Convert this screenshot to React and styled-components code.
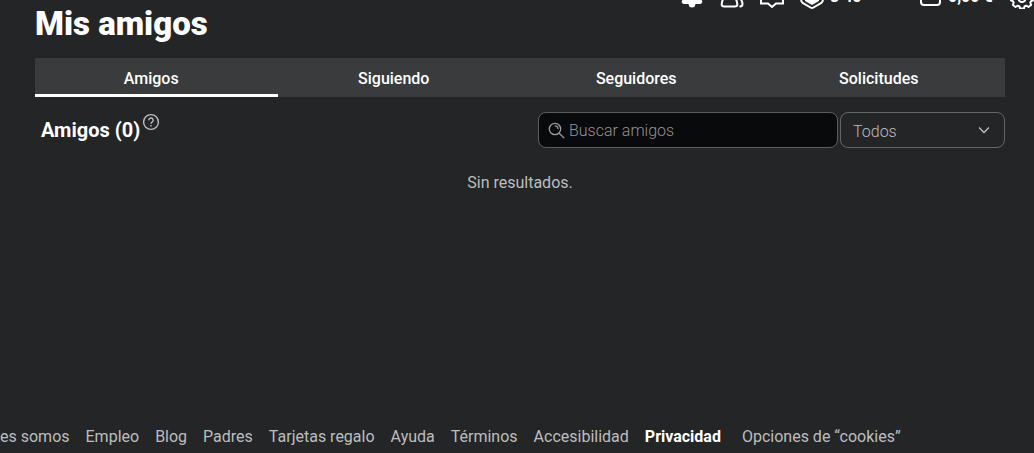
import React from 'react'
import styled, { createGlobalStyle } from 'styled-components'

const GlobalStyle = createGlobalStyle`
  * {
    box-sizing: border-box;
  }

  body {
    margin: 0;
    background: #232527;
    color: #fff;
    font-family: Roboto, "Liberation Sans", sans-serif;
    font-size: 16px;
    overflow: hidden;
  }
`

const Page = styled.div`
  display: flex;
  flex-direction: column;
  min-height: 100vh;
`

const TopBar = styled.header`
  display: flex;
  justify-content: flex-end;
  align-items: flex-end;
  gap: 16px;
  height: 9px;
  overflow: hidden;
`

const TopButton = styled.button`
  display: flex;
  flex: none;
  align-items: center;
  gap: 6px;
  min-width: ${({ $width = 24 }) => $width}px;
  height: 24px;
  padding: 0;
  border: 0;
  background: none;
  color: #fff;
  font: inherit;
  font-weight: 700;
  line-height: 24px;

  svg {
    display: block;
    flex: none;
  }
`

const Main = styled.main`
  flex: 1;
  padding: 0 29px 0 35px;
`

const Title = styled.h1`
  margin: 0;
  padding-bottom: 19px;
  font-size: 33px;
  font-weight: 900;
  line-height: 30px;
`

const Tabs = styled.nav`
  display: grid;
  grid-template-columns: repeat(4, 1fr);
  background: #393b3d;
`

const Tab = styled.a`
  padding: 12px 10px 7px 0;
  border-bottom: 3px solid ${({ $active }) => ($active ? '#fff' : 'transparent')};
  color: #fff;
  font-weight: 500;
  line-height: 17px;
  text-align: center;
  text-decoration: none;
`

const Toolbar = styled.div`
  display: flex;
  align-items: center;
  gap: 2px;
  padding: 15px 0 0 6px;
`

const Heading = styled.h2`
  display: flex;
  flex: 1;
  margin: 0;
  font-size: 20px;
  font-weight: 700;
  line-height: 36px;
`

const HelpButton = styled.button`
  align-self: flex-start;
  margin: 1px 0 0 2px;
  padding: 0;
  border: 0;
  background: none;
  color: #bdbebe;

  svg {
    display: block;
  }
`

const SearchBox = styled.label`
  display: flex;
  align-items: center;
  gap: 4px;
  width: 300px;
  height: 36px;
  padding: 0 9px;
  border: 1px solid #5b5d5f;
  border-radius: 8px;
  background: #090a0c;
  color: #9b9c9d;
`

const SearchInput = styled.input`
  flex: 1;
  min-width: 0;
  padding: 0;
  border: 0;
  outline: 0;
  background: none;
  color: #fff;
  font: inherit;
  font-weight: 300;

  &::placeholder {
    color: #929394;
    opacity: 1;
  }
`

const FilterBox = styled.div`
  display: grid;
  align-items: center;
  width: 165px;
  height: 36px;
  border: 1px solid #656668;
  border-radius: 8px;
  color: #bdbebe;

  > * {
    grid-area: 1 / 1;
  }

  svg {
    justify-self: end;
    margin-right: 14px;
    pointer-events: none;
  }
`

const FilterSelect = styled.select`
  appearance: none;
  width: 100%;
  height: 34px;
  padding: 2px 32px 0 12px;
  border: 0;
  background: none;
  color: #bdbebe;
  font: inherit;
  font-weight: 300;
`

const Empty = styled.p`
  margin: 0;
  padding-top: 25px;
  color: #bdbebe;
  line-height: 20px;
  text-align: center;
`

const Footer = styled.footer`
  display: flex;
  gap: 16px;
  padding-bottom: 6px;
  line-height: 20px;
  white-space: nowrap;
`

const FooterLink = styled.a`
  margin-right: ${({ $strong }) => ($strong ? '5px' : 0)};
  color: ${({ $strong }) => ($strong ? '#fff' : '#bdbebe')};
  font-weight: ${({ $strong }) => ($strong ? 700 : 400)};
  text-decoration: none;
`

const tabs = ['Amigos', 'Siguiendo', 'Seguidores', 'Solicitudes']
const links = ['es somos', 'Empleo', 'Blog', 'Padres', 'Tarjetas regalo', 'Ayuda', 'Términos', 'Accesibilidad', 'Privacidad', 'Opciones de “cookies”']

function Icon({ children }) {
  return (
    <svg width="24" height="24" viewBox="0 0 24 24" fill="none" stroke="currentColor" strokeWidth="2" strokeLinejoin="round" strokeLinecap="round">
      {children}
    </svg>
  )
}

function App() {
  return (
    <>
      <GlobalStyle />
      <Page>
        <TopBar>
          <TopButton aria-label="Notificaciones">
            <Icon>
              <path d="M12 1a7 7 0 0 0-7 7v4l-3 3.500c-.8 2 .2 3.500 2 3.500h4.500l.8 2.500c1.200 1.200 4.200 1.200 5.400 0l.8-2.500H20c1.800 0 2.800-1.500 2-3.500L19 12V8a7 7 0 0 0-7-7z" fill="currentColor" stroke="none" />
            </Icon>
          </TopButton>
          <TopButton aria-label="Amigos">
            <Icon>
              <circle cx="9.500" cy="6" r="4" />
              <path d="M6 11c-2.500 2-4.300 5.500-4.300 8.500 0 1.200 1 2 2.500 2h10.600c1.500 0 2.500-.8 2.500-2 0-3-1.800-6.500-4.300-8.500" />
              <path d="M17.500 11.500c2.800 1.700 5 5 5 7.500 0 1.600-.8 2.400-2.300 2.500" />
            </Icon>
          </TopButton>
          <TopButton aria-label="Chat">
            <Icon>
              <path d="M1 3h22v15.500h-7L12 22l-4-3.500H1z" strokeLinejoin="miter" />
            </Icon>
          </TopButton>
          <TopButton $width={102}>
            <Icon>
              <path d="M12 1.500l9 5c1.200.7 1.800 1.600 1.800 2.900v5.800c0 1.300-.6 2.200-1.800 2.900l-7.500 4.400c-1 .6-2 .6-3 0L3 18.100c-1.200-.7-1.800-1.600-1.800-2.900V9.400c0-1.300.6-2.200 1.800-2.900z" />
              <path d="M12 5l7 4v7l-7 4-7-4V9z" fill="currentColor" stroke="none" />
              <path d="M9.500 9.500h5v5h-5z" fill="#232527" stroke="none" />
            </Icon>
            3 45
          </TopButton>
          <TopButton $width={76}>
            <Icon>
              <rect x="3" y="4" width="19" height="16" rx="3" />
            </Icon>
            0,00 €
          </TopButton>
          <TopButton aria-label="Configuración">
            <Icon>
              <path d="M10 2h4l.6 2.800 2 .9 2.400-1.600 2.900 2.900-1.600 2.400.9 2 1.700.6v3.500l-1.700.5-.9 1.500.8 2.500-2.600 2-2.300-1.300-1.700.8-.5 2h-4l-.5-2-1.700-.8-2.300 1.300-2.600-2 .8-2.500-.9-1.500L1 15.500V12l1.800-.6.9-2L2.100 7 5 4.100l2.400 1.600 2-.9z" />
              <circle cx="12" cy="13.500" r="3.500" />
            </Icon>
          </TopButton>
        </TopBar>
        <Main>
          <Title>Mis amigos</Title>
          <Tabs>
            {tabs.map((name, i) => (
              <Tab key={name} href="#" $active={i === 0}>{name}</Tab>
            ))}
          </Tabs>
          <Toolbar>
            <Heading>
              Amigos (0)
              <HelpButton aria-label="Ayuda">
                <svg width="18" height="18" viewBox="0 0 18 18" fill="none" stroke="currentColor" strokeWidth="1.4">
                  <circle cx="9" cy="9" r="7.4" />
                  <path d="M6.8 7.2a2.2 2.2 0 1 1 3.3 1.9c-.8.4-1.1.8-1.1 1.6M9 12v1.4" />
                </svg>
              </HelpButton>
            </Heading>
            <SearchBox>
              <svg width="17" height="17" viewBox="0 0 17 17" fill="none" stroke="currentColor" strokeWidth="1.3" strokeLinecap="round">
                <circle cx="7" cy="7" r="5.7" />
                <path d="M11.2 11.2l4.6 4.6M7.2 3.9a3 3 0 0 1 2.8 2.8" />
              </svg>
              <SearchInput placeholder="Buscar amigos" aria-label="Buscar amigos" />
            </SearchBox>
            <FilterBox>
              <FilterSelect aria-label="Filtro">
                <option>Todos</option>
              </FilterSelect>
              <svg width="12" height="8" viewBox="0 0 12 8" fill="none" stroke="currentColor" strokeWidth="1.4">
                <path d="M1 1.500l5 5 5-5" />
              </svg>
            </FilterBox>
          </Toolbar>
          <Empty>Sin resultados.</Empty>
        </Main>
        <Footer>
          {links.map((name) => (
            <FooterLink key={name} href="#" $strong={name === 'Privacidad'}>{name}</FooterLink>
          ))}
        </Footer>
      </Page>
    </>
  )
}

export default App
